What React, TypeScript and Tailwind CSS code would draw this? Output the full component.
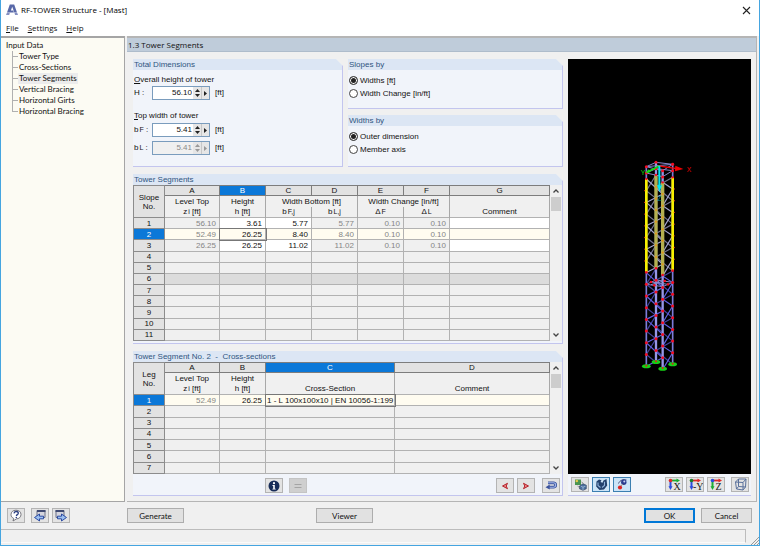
import React, { useState } from 'react';
import clsx from 'clsx';

const NAV_ITEMS = ['Tower Type', 'Cross-Sections', 'Tower Segments', 'Vertical Bracing', 'Horizontal Girts', 'Horizontal Bracing'];

const SEGMENTS = [
    { top: '56.10', height: '3.61', bf: '5.77', bl: '5.77', df: '0.10', dl: '0.10' },
    { top: '52.49', height: '26.25', bf: '8.40', bl: '8.40', df: '0.10', dl: '0.10' },
    { top: '26.25', height: '26.25', bf: '11.02', bl: '11.02', df: '0.10', dl: '0.10' },
];

const ROW_HEAD = 'border border-[#8c8c8c] text-center font-normal';
const COL_HEAD = 'h-[9px] border border-[#7d7d7d] text-center font-normal';
const SUB_HEAD = 'h-[11px] border-x border-[#a8a8a8] bg-[#f0f0f0] text-center font-normal';
const CELL = 'border border-[#b2b2b2] pr-[3px] text-right';

/* ---------- icons ---------- */

const LogoIcon = () => (
    <svg width="12" height="12" viewBox="0 0 12 12" aria-hidden="true">
        <path d="M3.800.5h4.400L11 8.500H8.300L6.200 2.800 4.900 6.400h2.300l.7 2.100H1z" fill="#5868a8" />
        <path d="M.9 8.800h3L3.200 11H0zM8.400 8.800h2.800l.8 2.200H9.100z" fill="#8590c2" />
    </svg>
);

const CloseIcon = () => (
    <svg width="9" height="9" viewBox="0 0 9 9" aria-hidden="true">
        <path d="M1 1l7 7M8 1L1 8" stroke="#222" strokeWidth="1.1" fill="none" />
    </svg>
);

const HelpIcon = () => (
    <svg width="14" height="13" viewBox="0 0 14 13" aria-hidden="true">
        <path d="M7 1.2c3.2 0 5 1.8 5 4.3s-2 4.4-4.6 4.4L4 12l.7-2.6C3 8.700 2 7.300 2 5.500 2 3 4 1.200 7 1.200z" fill="#fff" stroke="#6a6a72" strokeWidth=".9" />
        <path d="M5 4.400c.1-1.300 1-1.900 2.200-1.900s2.100.7 2.100 1.700c0 1.500-1.900 1.300-1.900 2.700" fill="none" stroke="#2c3f80" strokeWidth="1.300" />
        <circle cx="7.300" cy="8.500" r=".8" fill="#2c3f80" />
    </svg>
);

const WindowArrowIcon = ({ right }: { right?: boolean }) => (
    <svg width="14" height="13" viewBox="0 0 14 13" aria-hidden="true">
        <g transform={right ? 'translate(14 0) scale(-1 1)' : undefined}>
            <path d="M4 1.500h8v7H4z" fill="#d4d5de" stroke="#6a7088" />
            <path d="M4 1h8.500v2H4z" fill="#3f4a72" />
        </g>
        <path
            d={right ? 'M3.500 7.200h4V5l5 3.500-5 3.500V9.800h-4z' : 'M10.500 7.200h-4V5l-5 3.500 5 3.500V9.800h4z'}
            fill="#9cc0f0"
            stroke="#1f3f9c"
            strokeWidth=".9"
        />
    </svg>
);

const InfoIcon = () => (
    <svg width="12" height="12" viewBox="0 0 12 12" aria-hidden="true">
        <circle cx="6" cy="6" r="5.500" fill="#182c58" />
        <circle cx="6" cy="3.200" r="1.100" fill="#fff" />
        <path d="M4.500 5h2.300v3.700h.9v.9H4.400v-.9h.8V5.900h-.7z" fill="#fff" />
    </svg>
);

const EqualIcon = () => (
    <svg width="10" height="8" viewBox="0 0 10 8" aria-hidden="true">
        <path d="M1.500 2.500h7M1.500 5.500h7" stroke="#a4a4a4" strokeWidth="1.200" />
    </svg>
);

const TriangleIcon = ({ right }: { right?: boolean }) => (
    <svg width="8" height="8" viewBox="0 0 8 8" aria-hidden="true">
        <path d={right ? 'M1.500 1.300L6.500 4 1.500 6.700 2.800 4z' : 'M6.500 1.300L1.500 4l5 2.700L5.200 4z'} fill="#e98a8a" stroke="#b5222a" strokeWidth="1" />
    </svg>
);

const ReturnIcon = () => (
    <svg width="12" height="9" viewBox="0 0 12 9" aria-hidden="true">
        <path d="M3 1.800h5.500a2 2 0 010 4.400H4" fill="none" stroke="#3a529c" strokeWidth="2.800" />
        <path d="M3 1.800h5.500a2 2 0 010 4.400H4" fill="none" stroke="#9fb4e8" strokeWidth="1.100" />
        <path d="M.5 6.200L4.700 3.600v5z" fill="#3a529c" />
    </svg>
);

const RenderIcon = () => (
    <svg width="13" height="13" viewBox="0 0 13 13" aria-hidden="true">
        <path d="M1 1.500h6v5.500H1z" fill="#4a9450" />
        <circle cx="2.800" cy="3" r="1.300" fill="#e5c84c" />
        <path d="M5.500 8L9 5.800l3.300 1.400v3.600L9 12.300 5.500 10.800z" fill="#4c6f9c" stroke="#26395c" strokeWidth=".6" />
        <path d="M7 8.200l2 1 2.500-1M9 9.200V12" fill="none" stroke="#b5cbe6" strokeWidth=".7" />
        <path d="M3.500 8l2.500 2M7.500 4l2 1.500" stroke="#777" strokeWidth=".8" />
    </svg>
);

const SolidIcon = () => (
    <svg width="13" height="13" viewBox="0 0 13 13" aria-hidden="true">
        <path d="M1.500 3.500L4 1.500l2.500.8-1 1.700 2 .8 1-2.300L11.500 1l.7 6.500L9 11.500l-4.500.5L1.200 8.500z" fill="#22406c" />
        <path d="M3 4.500v3l2.500 2M9.500 3.800v3.700L7 9.500" fill="none" stroke="#8fb2da" strokeWidth="1.100" />
    </svg>
);

const ViewPointIcon = () => (
    <svg width="13" height="13" viewBox="0 0 13 13" aria-hidden="true">
        <path d="M2.500 5.500c1.500-3.500 5-4.500 8-3.500" fill="none" stroke="#4a4a78" strokeWidth="1" />
        <circle cx="7.800" cy="4.200" r="2.700" fill="#2b3c8e" />
        <circle cx="8.300" cy="3.600" r="1" fill="#c9d4f4" />
        <path d="M4.500 8L7 6.200" stroke="#888" strokeWidth="1" />
        <circle cx="4" cy="9.500" r="2.100" fill="#dd2323" />
    </svg>
);

const AxisIcon = ({ axis }: { axis: 'X' | '-Y' | 'Z' }) => (
    <svg width="15" height="13" viewBox="0 0 15 13" aria-hidden="true">
        <path d="M3.500 3v6" stroke={axis === 'Z' ? '#1cae35' : '#2b4be0'} strokeWidth="2" />
        <path d="M1.500 8.300h4l-2 3.700z" fill={axis === 'Z' ? '#1cae35' : '#2b4be0'} />
        <path d="M3.500 2.500h7" stroke={axis === 'X' ? '#1cae35' : '#e02a2a'} strokeWidth="1.800" />
        <path d="M9.500.5v4l3.500-2z" fill={axis === 'X' ? '#1cae35' : '#e02a2a'} />
        <circle cx="3.500" cy="2.500" r="1.800" fill={axis === 'X' ? '#e02a2a' : axis === 'Z' ? '#2b4be0' : '#1b7f2b'} />
        <text x={axis === '-Y' ? 5 : 6.500} y="12" fontSize="10" fontFamily="Liberation Serif, serif" fill="#1a1a1a">{axis}</text>
    </svg>
);

const CubeIcon = () => (
    <svg width="13" height="13" viewBox="0 0 13 13" aria-hidden="true">
        <path d="M1.500 4l7.500.5v7.500l-6.500-1zM4.500 1h7.500l-.5 8-7-.5zM1.500 4l3-3M9 4.500L12 1M9 12l2.500-3M2.500 11l2-2.500" fill="none" stroke="#5a719c" strokeWidth="1" />
    </svg>
);

/* ---------- controls ---------- */

type ToolButtonProps = { label: string; active?: boolean; disabled?: boolean; onClick?: () => void; children: React.ReactNode };

const ToolButton = ({ label, active, disabled, onClick, children }: ToolButtonProps) => (
    <button
        type="button"
        aria-label={label}
        disabled={disabled}
        onClick={onClick}
        className={clsx(
            'flex h-[15px] w-[18px] items-center justify-center border',
            active ? 'border-[#3c7fb1] bg-[#cce4f7]' : disabled ? 'border-[#c4c4c4] bg-[#cfcfcf]' : 'border-[#b4b4b4] bg-[#e3e3e3]',
        )}
    >
        {children}
    </button>
);

const PushButton = ({ children, primary }: { children: React.ReactNode; primary?: boolean }) => (
    <button
        type="button"
        className={clsx(
            'flex h-[15px] items-center justify-center bg-[#e1e1e1] font-[Lato,sans-serif] text-[8px]',
            primary ? 'w-[51px] border-2 border-[#0078d7]' : 'border border-[#adadad]',
            !primary && (children === 'Cancel' ? 'w-[51px]' : 'w-[57px]'),
        )}
    >
        {children}
    </button>
);

const Group = ({ title, className, children }: { title: string; className?: string; children: React.ReactNode }) => (
    <section
        className={clsx(
            'flex flex-col border-r border-b border-[#c3c5ee] bg-[#f1f4fa] [clip-path:polygon(0_0,calc(100%-7px)_0,100%_7px,100%_100%,0_100%)]',
            className,
        )}
    >
        <h2 className="h-[11px] shrink-0 bg-[#dce6f4] pl-px leading-[11px] whitespace-pre text-[#2f5580]">{title}</h2>
        {children}
    </section>
);

const NumberField = ({ id, label, value, disabled }: { id: string; label: React.ReactNode; value: string; disabled?: boolean }) => {
    const [current, setCurrent] = useState(value);
    const step = (delta: number) => setCurrent((Number(current) + delta).toFixed(2));
    return (
        <div className="flex h-[14px] items-center">
            <label htmlFor={id} className="w-[18px] whitespace-nowrap">{label}</label>
            <div className={clsx('flex h-[14px] w-[58px] border border-[#7a9cbd]', disabled ? 'bg-[#f0f0f0] text-[#8a8a8a]' : 'bg-white')}>
                <input
                    id={id}
                    value={current}
                    disabled={disabled}
                    onChange={e => setCurrent(e.target.value)}
                    className="w-10 min-w-0 bg-transparent pr-px text-right outline-none"
                />
                <div className="flex w-2 flex-col bg-[#e6e6e6]">
                    <button type="button" aria-label="Increase" disabled={disabled} onClick={() => step(0.1)} className="flex h-1.5 items-end justify-center pb-px">
                        <svg width="5" height="3" viewBox="0 0 5 3"><path d="M0 3l2.500-3L5 3z" fill={disabled ? '#999' : '#222'} /></svg>
                    </button>
                    <button type="button" aria-label="Decrease" disabled={disabled} onClick={() => step(-0.1)} className="flex h-1.5 items-start justify-center pt-px">
                        <svg width="5" height="3" viewBox="0 0 5 3"><path d="M0 0l2.500 3L5 0z" fill={disabled ? '#999' : '#222'} /></svg>
                    </button>
                </div>
                <button type="button" aria-label="More" disabled={disabled} className="flex w-2 items-center justify-center border-l border-[#c8c8c8] bg-[#e6e6e6]">
                    <svg width="3" height="5" viewBox="0 0 3 5"><path d="M0 0l3 2.500L0 5z" fill={disabled ? '#999' : '#222'} /></svg>
                </button>
            </div>
            <span className="pl-[5px]">[ft]</span>
        </div>
    );
};

const RadioOption = ({ name, label, defaultChecked }: { name: string; label: string; defaultChecked?: boolean }) => (
    <label className="flex h-[13px] items-center gap-0.5">
        <input
            type="radio"
            name={name}
            defaultChecked={defaultChecked}
            className="size-[9px] appearance-none rounded-full border border-[#444] bg-white checked:bg-[#222] checked:shadow-[inset_0_0_0_1px_#fff]"
        />
        {label}
    </label>
);

const ScrollBar = () => (
    <div className="flex w-3 flex-col items-center bg-[#f0f0f0]">
        <button type="button" aria-label="Scroll up" className="flex h-3 w-full shrink-0 items-center justify-center">
            <svg width="6" height="4" viewBox="0 0 6 4"><path d="M.5 3.500L3 1l2.500 2.500" fill="none" stroke="#444" strokeWidth="1.300" /></svg>
        </button>
        <div className="h-[14px] w-2.5 bg-[#cdcdcd]" />
        <button type="button" aria-label="Scroll down" className="mt-auto flex h-3 w-full shrink-0 items-center justify-center">
            <svg width="6" height="4" viewBox="0 0 6 4"><path d="M.5.5L3 3 5.500.5" fill="none" stroke="#444" strokeWidth="1.300" /></svg>
        </button>
    </div>
);

const Letters = ({ letters, active }: { letters: string[]; active: string }) => (
    <>
        {letters.map(l => (
            <th key={l} scope="col" className={clsx(COL_HEAD, l === active ? 'bg-[#0b78d8] text-white' : 'bg-[#e2e2e2]')}>{l}</th>
        ))}
    </>
);

const Sub = ({ children }: { children: React.ReactNode }) => <span className="pl-px text-[7px] leading-none">{children}</span>;

/* ---------- tables ---------- */

const SegmentTable = () => (
    <div className="flex">
        <div className="min-w-0 flex-1">
            <table className="h-[156px] w-full table-fixed border-collapse leading-[9px] whitespace-nowrap">
                <colgroup>
                    <col className="w-[31px]" />
                    <col className="w-[55px]" />
                    <col className="w-[46px]" />
                    <col className="w-[46px]" />
                    <col className="w-[46px]" />
                    <col className="w-[46px]" />
                    <col className="w-[46px]" />
                    <col />
                </colgroup>
                <thead>
                    <tr>
                        <th rowSpan={3} scope="col" className={clsx(ROW_HEAD, 'bg-[#e2e2e2]')}>Slope<br />No.</th>
                        <Letters letters={['A', 'B', 'C', 'D', 'E', 'F', 'G']} active="B" />
                    </tr>
                    <tr>
                        <th className={SUB_HEAD}>Level Top</th>
                        <th className={SUB_HEAD}>Height</th>
                        <th colSpan={2} className={SUB_HEAD}>Width Bottom [ft]</th>
                        <th colSpan={2} className={SUB_HEAD}>Width Change [in/ft]</th>
                        <th className={SUB_HEAD} />
                    </tr>
                    <tr>
                        <th className={SUB_HEAD}>z<Sub>i</Sub> [ft]</th>
                        <th className={SUB_HEAD}>h [ft]</th>
                        <th className={SUB_HEAD}>b<Sub>F,j</Sub></th>
                        <th className={SUB_HEAD}>b<Sub>L,j</Sub></th>
                        <th className={SUB_HEAD}>Δ<Sub>F</Sub></th>
                        <th className={SUB_HEAD}>Δ<Sub>L</Sub></th>
                        <th className={SUB_HEAD}>Comment</th>
                    </tr>
                </thead>
                <tbody>
                    {Array.from({ length: 11 }, (_, i) => {
                        const row = SEGMENTS[i];
                        const current = i === 1;
                        const locked = clsx(CELL, 'text-[#858585]', current ? 'bg-[#fffcf0]' : i === 5 ? 'bg-[#dcdcdc]' : 'bg-[#f0f0f0]');
                        const open = clsx(CELL, current ? 'bg-[#fffcf0]' : row ? 'bg-white' : i === 5 ? 'bg-[#dcdcdc]' : 'bg-[#f0f0f0]');
                        return (
                            <tr key={i} className="h-[11px]">
                                <th scope="row" className={clsx(ROW_HEAD, current ? 'bg-[#0b78d8] text-white' : 'bg-[#e2e2e2]')}>{i + 1}</th>
                                <td className={locked}>{row?.top}</td>
                                <td className={clsx(open, current && 'outline outline-[#777]')}>{row?.height}</td>
                                <td className={open}>{row?.bf}</td>
                                <td className={locked}>{row?.bl}</td>
                                <td className={locked}>{row?.df}</td>
                                <td className={locked}>{row?.dl}</td>
                                <td className={open} />
                            </tr>
                        );
                    })}
                </tbody>
            </table>
        </div>
        <ScrollBar />
    </div>
);

const CrossSectionTable = () => (
    <div className="flex">
        <div className="min-w-0 flex-1">
            <table className="h-[112px] w-full table-fixed border-collapse leading-[9px] whitespace-nowrap">
                <colgroup>
                    <col className="w-[31px]" />
                    <col className="w-[55px]" />
                    <col className="w-[46px]" />
                    <col className="w-[129px]" />
                    <col />
                </colgroup>
                <thead>
                    <tr>
                        <th rowSpan={3} scope="col" className={clsx(ROW_HEAD, 'bg-[#e2e2e2]')}>Leg<br />No.</th>
                        <Letters letters={['A', 'B', 'C', 'D']} active="C" />
                    </tr>
                    <tr>
                        <th className={SUB_HEAD}>Level Top</th>
                        <th className={SUB_HEAD}>Height</th>
                        <th className={SUB_HEAD} />
                        <th className={SUB_HEAD} />
                    </tr>
                    <tr>
                        <th className={SUB_HEAD}>z<Sub>i</Sub> [ft]</th>
                        <th className={SUB_HEAD}>h [ft]</th>
                        <th className={SUB_HEAD}>Cross-Section</th>
                        <th className={SUB_HEAD}>Comment</th>
                    </tr>
                </thead>
                <tbody>
                    {Array.from({ length: 7 }, (_, i) => {
                        const first = i === 0;
                        const cell = clsx(CELL, first ? 'bg-[#fffcf0]' : 'bg-[#f0f0f0]');
                        return (
                            <tr key={i} className="h-[11px]">
                                <th scope="row" className={clsx(ROW_HEAD, first ? 'bg-[#0b78d8] text-white' : 'bg-[#e2e2e2]')}>{i + 1}</th>
                                <td className={clsx(cell, 'text-[#858585]')}>{first && '52.49'}</td>
                                <td className={cell}>{first && '26.25'}</td>
                                <td className={clsx('border border-[#b2b2b2] pl-px', first ? 'bg-[#fffcf0] outline outline-[#777]' : 'bg-[#f0f0f0]')}>
                                    {first && '1 - L 100x100x10 | EN 10056-1:199'}
                                </td>
                                <td className={cell} />
                            </tr>
                        );
                    })}
                </tbody>
            </table>
        </div>
        <ScrollBar />
    </div>
);

/* ---------- 3D preview ---------- */

const LEGS = [
    { x: 49, top: 50, yellow: [87, 367], foot: 649, inner: false },
    { x: 78, top: 37, yellow: [75, 355], foot: 636, inner: true },
    { x: 98, top: 62, yellow: [97, 375], foot: 656, inner: true },
    { x: 128, top: 43, yellow: [82, 362], foot: 643, inner: false },
];

// leg pairs; the back faces run against the front ones so the braces cross
const FACES = [
    { a: 0, b: 1, back: true },
    { a: 1, b: 3, back: true },
    { a: 0, b: 2, back: false },
    { a: 2, b: 3, back: false },
];

const TowerPreview = () => {
    const panels = Array.from({ length: 16 }, (_, i) => i);
    // 8 panels in the selected segment, 8 below it
    const nodeY = (leg: number, i: number) => LEGS[leg].yellow[0] + i * 35.1;
    return (
        <svg className="h-full w-full" viewBox="0 0 183 415" role="img" aria-label="Tower model">
            <g transform="translate(62 91) scale(0.3333)" fill="none">
                {panels.map(i => (
                    <g key={i} stroke={i < 8 ? '#a6a6d2' : '#6060e4'} strokeWidth="3.500">
                        {FACES.map(({ a, b, back }) => {
                            const down = (i % 2 === 0) !== back;
                            return (
                                <path
                                    key={`${a}${b}`}
                                    d={`M${LEGS[a].x} ${nodeY(a, down ? i : i + 1)}L${LEGS[b].x} ${nodeY(b, down ? i + 1 : i)}`}
                                    opacity={back ? 0.7 : 1}
                                />
                            );
                        })}
                    </g>
                ))}
                {LEGS.map(leg => (
                    <g key={leg.x}>
                        <path d={`M${leg.x} ${leg.top}V${leg.foot}`} stroke={leg.inner ? '#9696e6' : '#7c7cd8'} strokeWidth={leg.inner ? 7 : 5} />
                        <path d={`M${leg.x} ${leg.yellow[0]}V${leg.yellow[1]}`} stroke={leg.inner ? '#b4b050' : '#f8f000'} strokeWidth={leg.inner ? 10 : 8} />
                    </g>
                ))}
                <g stroke="#8888cc" strokeWidth="3">
                    <path d="M49 50L78 37 128 43 98 62zM49 69L78 56 128 62 98 80zM49 50L128 43" />
                    <path d="M49 403L78 390 128 397 98 410zM63 396L114 403M63 404L104 392M73 406L90 390" />
                </g>
                {LEGS.map((leg, l) => (
                    <g key={leg.x} fill="#f20d20">
                        <circle cx={leg.x} cy={leg.top} r="4.500" />
                        <circle cx={leg.x} cy={leg.top + 19} r="4.500" />
                        <circle cx={leg.x} cy={leg.yellow[0]} r="3.500" />
                        <circle cx={leg.x} cy={leg.yellow[1]} r="4" />
                        {panels.slice(1, 8).map(i => (
                            <circle
                                key={i}
                                cx={leg.inner ? leg.x : leg.x + (l === 0 ? -5 : 5)}
                                cy={nodeY(l, i)}
                                r={leg.inner ? 3 : 2}
                                fill={leg.inner ? '#e89418' : '#d03a10'}
                            />
                        ))}
                        {panels.slice(9).map(i => (
                            <circle key={i} cx={leg.x} cy={nodeY(l, i)} r="4.500" />
                        ))}
                    </g>
                ))}
                <g fill="#f20d20">
                    <circle cx="63" cy="396" r="4" />
                    <circle cx="73" cy="406" r="4" />
                    <circle cx="104" cy="393" r="4" />
                    <circle cx="114" cy="403" r="4" />
                </g>
                {LEGS.map(leg => (
                    <g key={leg.x}>
                        <ellipse cx={leg.x} cy={leg.foot} rx="13" ry="6" fill="#16d016" />
                        <circle cx={leg.x} cy={leg.foot - 2} r="3" fill="#e02020" />
                    </g>
                ))}
                <path d="M88 48L140 56" stroke="#f00000" strokeWidth="4" />
                <path d="M136 47l24 10-25 7z" fill="#f00000" />
                <path d="M88 48L52 66" stroke="#10e010" strokeWidth="5" />
                <path d="M46 69l10-11 5 9z" fill="#10e010" />
                <path d="M88 48V112" stroke="#00e8f0" strokeWidth="6" />
                <path d="M81 106h15l-7 20z" fill="#00e8f0" />
                <g fontFamily="Liberation Sans, sans-serif" fontSize="20">
                    <text x="170" y="67" fill="#f00000">X</text>
                    <text x="32" y="75" fill="#10e010">Y</text>
                    <text x="82" y="152" fill="#08909c">Z</text>
                </g>
            </g>
        </svg>
    );
};

/* ---------- window ---------- */

const TitleBar = () => (
    <header className="bg-white font-['Open_Sans',sans-serif]">
        <div className="flex h-5 items-center pr-2 pl-[5px]">
            <LogoIcon />
            <h1 className="pl-[3px] text-black">RF-TOWER Structure - [Mast]</h1>
            <button type="button" aria-label="Close" className="ml-auto"><CloseIcon /></button>
        </div>
        <nav className="flex h-4 items-center gap-[9px] pl-[5px]">
            {['File', 'Settings', 'Help'].map(item => (
                <button key={item} type="button" className="leading-4"><u>{item[0]}</u>{item.slice(1)}</button>
            ))}
        </nav>
    </header>
);

const Sidebar = () => {
    const [selected, setSelected] = useState('Tower Segments');
    return (
        <nav className="w-[124px] shrink-0 border-t-2 border-r border-b border-[#a5a5a5] bg-[#fcfbf3] pt-0.5 font-[Lato,sans-serif] leading-[11px]">
            <div className="pl-[5px]">Input Data</div>
            <ul className="ml-[11px]">
                {NAV_ITEMS.map((item, i) => (
                    <li key={item} className="flex h-[11px]">
                        <span className={clsx('w-px bg-[#b0b0b0]', i === NAV_ITEMS.length - 1 ? 'h-1.5' : 'h-full')} />
                        <span className="mt-[5px] h-px w-[5px] bg-[#b0b0b0]" />
                        <button
                            type="button"
                            onClick={() => setSelected(item)}
                            className={clsx('h-[11px] px-px whitespace-nowrap', selected === item && 'bg-[#ececec]')}
                        >
                            {item}
                        </button>
                    </li>
                ))}
            </ul>
        </nav>
    );
};

const App = () => (
    <div className="flex min-h-screen flex-col border-x border-b border-[#45a5e0] bg-[#f0f0f0] font-['Liberation_Sans',Arial,sans-serif] text-[8px] text-[#111]">
        <TitleBar />

        <div className="flex flex-1">
            <Sidebar />
            <main className="mr-0.5 ml-0.5 flex min-w-0 flex-1 flex-col border-t-2 border-r border-b border-[#b5b5b5]">
                <h2 className="h-[14px] border-b border-[#aebccb] bg-[#bfccda] pl-px font-['Open_Sans',sans-serif] leading-[13px]">1.3 Tower Segments</h2>

                <div className="grid flex-1 grid-cols-[430fr_183fr] gap-[5px] pt-[7px] pr-[5px] pb-[5px] pl-1.5">
                    <div className="flex min-w-0 flex-col">
                        <div className="grid grid-cols-[210fr_215fr] gap-[5px]">
                            <Group title="Total Dimensions" className="h-[108px]">
                                <div className="px-px pt-[3px]">
                                    <p className="h-[13px] leading-[13px]"><u>O</u>verall height of tower</p>
                                    <NumberField id="height" label="H :" value="56.10" />
                                    <p className="mt-2 h-[15px] leading-[15px]"><u>T</u>op width of tower</p>
                                    <div className="flex flex-col gap-1">
                                        <NumberField id="bf" label={<>b<Sub>F</Sub> :</>} value="5.41" />
                                        <NumberField id="bl" label={<>b<Sub>L</Sub> :</>} value="5.41" disabled />
                                    </div>
                                </div>
                            </Group>
                            <div className="flex flex-col justify-between">
                                <Group title="Slopes by" className="h-[50px]">
                                    <div className="pt-1 pl-px">
                                        <RadioOption name="slopes" label="Widths [ft]" defaultChecked />
                                        <RadioOption name="slopes" label="Width Change [in/ft]" />
                                    </div>
                                </Group>
                                <Group title="Widths by" className="h-[52px]">
                                    <div className="pt-1 pl-px">
                                        <RadioOption name="widths" label="Outer dimension" defaultChecked />
                                        <RadioOption name="widths" label="Member axis" />
                                    </div>
                                </Group>
                            </div>
                        </div>

                        <Group title="Tower Segments" className="mt-[7px] pb-0.5">
                            <SegmentTable />
                        </Group>

                        <Group title="Tower Segment No. 2  -  Cross-sections" className="mt-[7px] flex-1">
                            <CrossSectionTable />
                            <div className="flex items-center pt-1 pr-0.5 pb-0.5 pl-[132px]">
                                <div className="flex gap-1.5">
                                    <ToolButton label="Cross-section info"><InfoIcon /></ToolButton>
                                    <ToolButton label="Equal" disabled><EqualIcon /></ToolButton>
                                </div>
                                <div className="ml-auto flex gap-[3px]">
                                    <ToolButton label="Previous segment"><TriangleIcon /></ToolButton>
                                    <ToolButton label="Next segment"><TriangleIcon right /></ToolButton>
                                </div>
                                <div className="pl-[7px]">
                                    <ToolButton label="Apply"><ReturnIcon /></ToolButton>
                                </div>
                            </div>
                        </Group>
                    </div>

                    <aside className="flex min-w-0 flex-col border-b border-[#c3c5ee] bg-[#f1f4fa]">
                        <div className="min-h-0 flex-1 bg-black">
                            <TowerPreview />
                        </div>
                        <div className="flex h-[21px] items-center justify-between pr-0.5 pl-[3px]">
                            <div className="flex gap-[3px]">
                                <ToolButton label="Render"><RenderIcon /></ToolButton>
                                <ToolButton label="Solid model" active><SolidIcon /></ToolButton>
                                <ToolButton label="View point" active><ViewPointIcon /></ToolButton>
                            </div>
                            <div className="flex gap-[3px]">
                                <ToolButton label="View in X"><AxisIcon axis="X" /></ToolButton>
                                <ToolButton label="View in -Y"><AxisIcon axis="-Y" /></ToolButton>
                                <ToolButton label="View in Z"><AxisIcon axis="Z" /></ToolButton>
                                <div className="pl-[3px]">
                                    <ToolButton label="Isometric view"><CubeIcon /></ToolButton>
                                </div>
                            </div>
                        </div>
                    </aside>
                </div>
            </main>
        </div>

        <footer>
            <div className="flex h-[27px] items-center pr-[7px] pl-1.5">
                <ToolButton label="Help"><HelpIcon /></ToolButton>
                <div className="flex gap-[3px] pl-1.5">
                    <ToolButton label="Previous table"><WindowArrowIcon /></ToolButton>
                    <ToolButton label="Next table"><WindowArrowIcon right /></ToolButton>
                </div>
                <div className="flex gap-[132px] pl-[57px]">
                    <PushButton>Generate</PushButton>
                    <PushButton>Viewer</PushButton>
                </div>
                <div className="ml-auto flex gap-1.5">
                    <PushButton primary>OK</PushButton>
                    <PushButton>Cancel</PushButton>
                </div>
            </div>
            <div className="flex h-4 items-end justify-between">
                <div className="mr-1 mb-0.5 h-[14px] flex-1 border-t border-r border-b border-[#bcbcbc] border-b-[#fafafa]" />
                <svg width="9" height="9" viewBox="0 0 9 9" aria-hidden="true">
                    <path d="M1 9l8-8M4 9l5-5M7 9l2-2" stroke="#999" strokeWidth="1" />
                </svg>
            </div>
        </footer>
    </div>
);

export default App;
